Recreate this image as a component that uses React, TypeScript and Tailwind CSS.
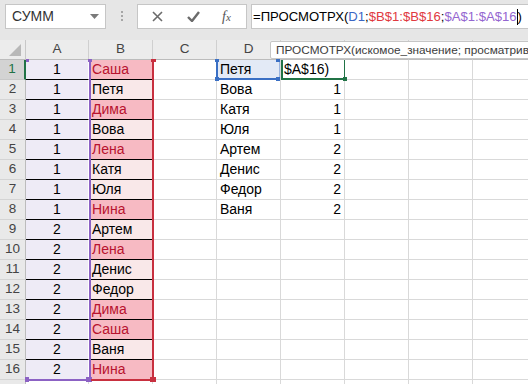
import React from "react";

const font = { fontFamily: '"Liberation Sans", Arial, sans-serif' };

const colA = [1, 1, 1, 1, 1, 1, 1, 1, 2, 2, 2, 2, 2, 2, 2, 2];
const colB = [
  "Саша", "Петя", "Дима", "Вова", "Лена", "Катя", "Юля", "Нина",
  "Артем", "Лена", "Денис", "Федор", "Дима", "Саша", "Ваня", "Нина",
];
const pink = [0, 2, 4, 7, 9, 12, 13, 15];
const colD = ["Петя", "Вова", "Катя", "Юля", "Артем", "Денис", "Федор", "Ваня"];
const colE = ["", "1", "1", "1", "2", "2", "2", "2"];
const letters = ["A", "B", "C", "D", "E", "F", "G", "H"];

const Toolbar = () => (
  <div className="h-[40px] bg-[#e6e6e6] flex items-start pt-[4px] pl-[5px] whitespace-nowrap">
    {/* name box */}
    <div className="w-[101px] h-[25px] shrink-0 border border-[#c6c6c6] bg-white flex items-center justify-between pl-[6px] pr-[6px] text-[14px] text-[#333]">
      СУММ
      <svg width="9" height="5" viewBox="0 0 9 5">
        <path d="M0 0 L9 0 L4.5 5 Z" fill="#7a7a7a" />
      </svg>
    </div>
    {/* grip */}
    <div className="ml-[15px] mt-[7px] flex flex-col gap-[2px] shrink-0">
      <div className="w-[2px] h-[2px] bg-[#a6a6a6]" />
      <div className="w-[2px] h-[2px] bg-[#a6a6a6]" />
      <div className="w-[2px] h-[2px] bg-[#a6a6a6]" />
    </div>
    {/* cancel / enter / fx */}
    <div className="ml-[14px] w-[110px] h-[25px] shrink-0 border border-[#c6c6c6] bg-white flex items-center">
      <svg className="ml-[14px]" width="11" height="11" viewBox="0 0 11 11">
        <path d="M1 1 L10 10 M10 1 L1 10" stroke="#6b6b6b" strokeWidth="1.6" />
      </svg>
      <svg className="ml-[24px]" width="13" height="11" viewBox="0 0 13 11">
        <path d="M1 6 L5 10 L12 1" stroke="#6b6b6b" strokeWidth="2.4" fill="none" />
      </svg>
      <span
        className="ml-[22px] text-[14px] italic text-[#555]"
        style={{ fontFamily: '"Liberation Serif", serif' }}
      >
        f<span className="text-[11px]">x</span>
      </span>
    </div>
    {/* formula */}
    <div className="ml-[4px] w-[300px] h-[25px] shrink-0 border border-[#c6c6c6] bg-white flex items-center pl-[1px] text-[13.1px] text-black">
      =ПРОСМОТРХ(<span className="text-[#3a66c4]">D1</span>;
      <span className="text-[#e0393e]">$B$1:$B$16</span>;
      <span className="text-[#9466d0]">$A$1:$A$16</span>
      <span className="inline-block w-[1px] h-[16px] bg-black" />)
    </div>
  </div>
);

// coloured borders Excel draws around referenced ranges
const Mark = ({ c }: { c: string }) => <div className={`absolute ${c}`} />;

const Sheet = () => (
  <div className="relative">
    <div className="grid grid-cols-[26px_63px_64px_64px_64px_64px_64px_64px_64px] w-max">
      {/* header row */}
      <div className="relative h-[20px] bg-[#ececec] border-r border-b border-r-[#c8c8c8] border-b-[#bcbcbc]">
        <svg className="absolute right-[4px] bottom-[3px]" width="12" height="12" viewBox="0 0 12 12">
          <path d="M12 0 L12 12 L0 12 Z" fill="#b8b8b8" />
        </svg>
      </div>
      {letters.map((l) => (
        <div
          key={l}
          className="h-[20px] bg-[#ececec] border-r border-b border-r-[#d0d0d0] border-b-[#bcbcbc] flex items-center justify-center text-[13.5px] text-[#444]"
        >
          {l}
        </div>
      ))}

      {Array.from({ length: 17 }).map((_, r) => {
        const isPink = pink.includes(r);
        return (
          <React.Fragment key={r}>
            <div
              className={`h-[20px] flex items-center justify-center text-[13.5px] border-b ${
                r === 0
                  ? "bg-[#d3d3d3] text-[#217346] border-b-[#c8c8c8] border-r-2 border-r-[#217346]"
                  : "bg-[#e9e9e9] text-[#444] border-b-[#d4d4d4] border-r border-r-[#bcbcbc]"
              }`}
            >
              {r < 16 ? r + 1 : ""}
            </div>
            {r < 16 ? (
              <div className="h-[20px] bg-[#eeebf6] border-b border-b-black border-r border-r-white flex items-center justify-center text-[14px] text-black">
                {colA[r]}
              </div>
            ) : (
              <div className="h-[20px] border-r border-b border-[#d9d9d9] bg-white" />
            )}
            {r < 16 ? (
              <div
                className={`h-[20px] border-b border-b-black border-r border-r-white flex items-center pl-[3px] text-[14px] ${
                  isPink ? "bg-[#f7bac3] text-[#b8122e]" : "bg-[#f9e8e9] text-black"
                }`}
              >
                {colB[r]}
              </div>
            ) : (
              <div className="h-[20px] border-r border-b border-[#d9d9d9] bg-white" />
            )}
            <div className="h-[20px] border-r border-b border-[#d9d9d9] bg-white" />
            <div
              className={`h-[20px] border-r border-b border-[#d9d9d9] flex items-center pl-[3px] text-[14px] text-black ${
                r === 0 ? "bg-[#e3eaf6]" : "bg-white"
              }`}
            >
              {colD[r] ?? ""}
            </div>
            <div className="h-[20px] border-r border-b border-[#d9d9d9] bg-white flex items-center justify-end pr-[3px] text-[14px] text-black">
              {r === 0 ? <span className="mr-auto pl-[3px]">$A$16)</span> : colE[r] ?? ""}
            </div>
            <div className="h-[20px] border-r border-b border-[#d9d9d9] bg-white" />
            <div className="h-[20px] border-r border-b border-[#d9d9d9] bg-white" />
            <div className="h-[20px] border-r border-b border-[#d9d9d9] bg-white" />
          </React.Fragment>
        );
      })}
    </div>

    {/* $A$1:$A$16 */}
    <Mark c="left-[89px] top-[20px] w-[2px] h-[321px] bg-[#8c62c4]" />
    <Mark c="left-[26px] top-[339px] w-[65px] h-[2px] bg-[#8c62c4]" />
    <Mark c="left-[25px] top-[337px] w-[4px] h-[5px] bg-[#8c62c4]" />
    <Mark c="left-[86px] top-[337px] w-[6px] h-[5px] bg-[#8c62c4]" />
    <Mark c="left-[26px] top-[19px] w-[3px] h-[3px] bg-[#8c62c4]" />
    <Mark c="left-[88px] top-[19px] w-[4px] h-[3px] bg-[#8c62c4]" />

    {/* $B$1:$B$16 */}
    <Mark c="left-[152px] top-[20px] w-[2px] h-[321px] bg-[#c8303f]" />
    <Mark c="left-[91px] top-[339px] w-[63px] h-[2px] bg-[#c8303f]" />
    <Mark c="left-[150px] top-[337px] w-[6px] h-[5px] bg-[#c8303f]" />
    <Mark c="left-[151px] top-[19px] w-[5px] h-[3px] bg-[#c8303f]" />

    {/* D1 */}
    <Mark c="left-[216px] top-[20px] w-[2px] h-[20px] bg-[#3a6fc4]" />
    <Mark c="left-[217px] top-[38px] w-[62px] h-[2px] bg-[#3a6fc4]" />
    <Mark c="left-[279px] top-[20px] w-[1px] h-[20px] bg-[#9bb5e0]" />
    <Mark c="left-[215px] top-[19px] w-[4px] h-[3px] bg-[#3a6fc4]" />
    <Mark c="left-[276px] top-[19px] w-[4px] h-[3px] bg-[#3a6fc4]" />
    <Mark c="left-[215px] top-[37px] w-[4px] h-[4px] bg-[#3a6fc4]" />
    <Mark c="left-[276px] top-[37px] w-[4px] h-[4px] bg-[#3a6fc4]" />

    {/* active cell E1 */}
    <Mark c="left-[281px] top-[20px] w-[2px] h-[20px] bg-[#217346]" />
    <Mark c="left-[281px] top-[38px] w-[64px] h-[2px] bg-[#217346]" />
    <Mark c="left-[344px] top-[20px] w-[1px] h-[20px] bg-[#217346]" />
    <Mark c="left-[343px] top-[37px] w-[4px] h-[4px] bg-[#217346]" />
  </div>
);

export default function App() {
  return (
    <div className="relative w-[528px] h-[384px] overflow-hidden bg-white" style={font}>
      <Toolbar />
      <Sheet />
      {/* formula tooltip */}
      <div className="absolute left-[270px] top-[41px] w-[300px] h-[18px] bg-white border border-[#c6c6c6] rounded-[2px] pl-[5px] text-[11.8px] leading-[16px] text-[#3c3c3c] whitespace-nowrap">
        ПРОСМОТРХ(искомое_значение; просматриваемый_массив; возвращаемый_массив)
      </div>
    </div>
  );
}
